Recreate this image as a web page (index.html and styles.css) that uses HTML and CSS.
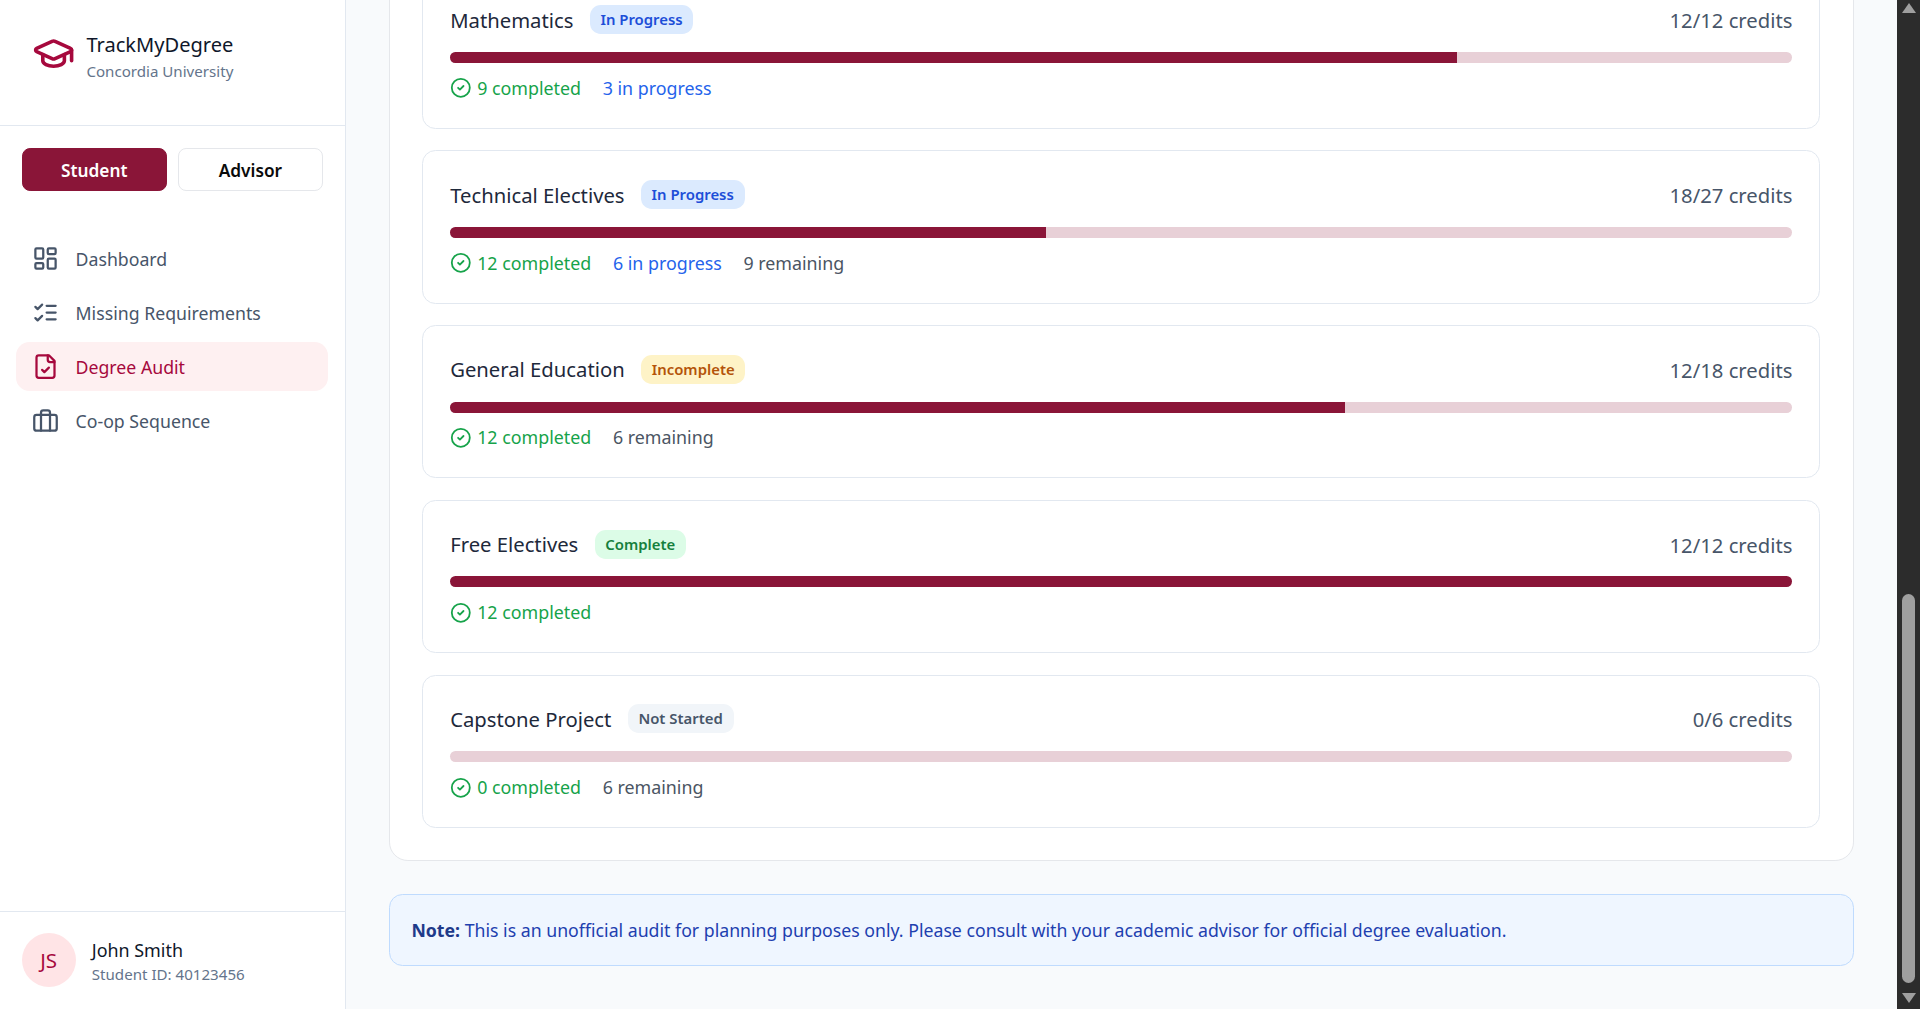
FILE: index.html
```html
<!DOCTYPE html>
<html lang="en">
<head>
  <meta charset="UTF-8">
  <meta name="viewport" content="width=device-width, initial-scale=1.0">
  <title>Degree Audit | TrackMyDegree</title>
  <link rel="stylesheet" href="styles.css">
</head>
<body>
  <aside class="sidebar">
    <div class="brand">
      <svg class="brand-icon" viewBox="0 0 24 24"><path d="M21.42 10.922a1 1 0 0 0-.019-1.838L12.83 5.18a2 2 0 0 0-1.66 0L2.6 9.08a1 1 0 0 0 0 1.832l8.57 3.908a2 2 0 0 0 1.66 0z"/><path d="M22 10v6"/><path d="M6 12.5V16a6 3 0 0 0 12 0v-3.5"/></svg>
      <div class="brand-text">
        <div class="brand-name">TrackMyDegree</div>
        <div class="brand-sub">Concordia University</div>
      </div>
    </div>

    <div class="role-toggle">
      <button class="role-btn active">Student</button>
      <button class="role-btn">Advisor</button>
    </div>

    <nav class="nav">
      <a href="#" class="nav-item">
        <svg class="nav-icon" viewBox="0 0 24 24"><rect x="3" y="3" width="7" height="9" rx="1"/><rect x="14" y="3" width="7" height="5" rx="1"/><rect x="14" y="12" width="7" height="9" rx="1"/><rect x="3" y="16" width="7" height="5" rx="1"/></svg>
        <span class="nav-label">Dashboard</span>
      </a>
      <a href="#" class="nav-item">
        <svg class="nav-icon" viewBox="0 0 24 24"><path d="m3 17 2 2 4-4"/><path d="m3 7 2 2 4-4"/><path d="M13 6h8"/><path d="M13 12h8"/><path d="M13 18h8"/></svg>
        <span class="nav-label">Missing Requirements</span>
      </a>
      <a href="#" class="nav-item active">
        <svg class="nav-icon" viewBox="0 0 24 24"><path d="M15 2H6a2 2 0 0 0-2 2v16a2 2 0 0 0 2 2h12a2 2 0 0 0 2-2V7Z"/><path d="M14 2v4a2 2 0 0 0 2 2h4"/><path d="m9 15 2 2 4-4"/></svg>
        <span class="nav-label">Degree Audit</span>
      </a>
      <a href="#" class="nav-item">
        <svg class="nav-icon" viewBox="0 0 24 24"><rect x="2" y="7" width="20" height="14" rx="2"/><path d="M16 21V5a2 2 0 0 0-2-2h-4a2 2 0 0 0-2 2v16"/></svg>
        <span class="nav-label">Co-op Sequence</span>
      </a>
    </nav>

    <div class="user">
      <div class="avatar">JS</div>
      <div>
        <div class="user-name">John Smith</div>
        <div class="user-id">Student ID: 40123456</div>
      </div>
    </div>
  </aside>

  <main class="main">
    <section class="panel">
      <article class="req">
        <div class="req-head">
          <div class="req-title"><h3>Mathematics</h3><span class="badge progress">In Progress</span></div>
          <span class="credits">12/12 credits</span>
        </div>
        <div class="bar"><div class="bar-fill" style="width: 75%"></div></div>
        <div class="req-meta">
          <span class="done"><svg class="check" viewBox="0 0 24 24"><circle cx="12" cy="12" r="10"/><path d="m9 12 2 2 4-4"/></svg>9 completed</span>
          <span class="doing">3 in progress</span>
        </div>
      </article>

      <article class="req">
        <div class="req-head">
          <div class="req-title"><h3>Technical Electives</h3><span class="badge progress">In Progress</span></div>
          <span class="credits">18/27 credits</span>
        </div>
        <div class="bar"><div class="bar-fill" style="width: 44.4%"></div></div>
        <div class="req-meta">
          <span class="done"><svg class="check" viewBox="0 0 24 24"><circle cx="12" cy="12" r="10"/><path d="m9 12 2 2 4-4"/></svg>12 completed</span>
          <span class="doing">6 in progress</span>
          <span class="left">9 remaining</span>
        </div>
      </article>

      <article class="req">
        <div class="req-head">
          <div class="req-title"><h3>General Education</h3><span class="badge incomplete">Incomplete</span></div>
          <span class="credits">12/18 credits</span>
        </div>
        <div class="bar"><div class="bar-fill" style="width: 66.67%"></div></div>
        <div class="req-meta">
          <span class="done"><svg class="check" viewBox="0 0 24 24"><circle cx="12" cy="12" r="10"/><path d="m9 12 2 2 4-4"/></svg>12 completed</span>
          <span class="left">6 remaining</span>
        </div>
      </article>

      <article class="req">
        <div class="req-head">
          <div class="req-title"><h3>Free Electives</h3><span class="badge complete">Complete</span></div>
          <span class="credits">12/12 credits</span>
        </div>
        <div class="bar"><div class="bar-fill" style="width: 100%"></div></div>
        <div class="req-meta">
          <span class="done"><svg class="check" viewBox="0 0 24 24"><circle cx="12" cy="12" r="10"/><path d="m9 12 2 2 4-4"/></svg>12 completed</span>
        </div>
      </article>

      <article class="req">
        <div class="req-head">
          <div class="req-title"><h3>Capstone Project</h3><span class="badge not-started">Not Started</span></div>
          <span class="credits">0/6 credits</span>
        </div>
        <div class="bar"><div class="bar-fill" style="width: 0%"></div></div>
        <div class="req-meta">
          <span class="done"><svg class="check" viewBox="0 0 24 24"><circle cx="12" cy="12" r="10"/><path d="m9 12 2 2 4-4"/></svg>0 completed</span>
          <span class="left">6 remaining</span>
        </div>
      </article>
    </section>

    <div class="note"><strong>Note:</strong> This is an unofficial audit for planning purposes only. Please consult with your academic advisor for official degree evaluation.</div>
  </main>

  <div class="scrollbar">
    <span class="arrow up"></span>
    <div class="track"><div class="thumb"></div></div>
    <span class="arrow down"></span>
  </div>
</body>
</html>
```

FILE: styles.css
```css
/* 1rem = one 16px unit of the design at the 135% display scale */
html {
  font-size: 21.6px;
}

body {
  margin: 0;
  height: 100vh;
  display: flex;
  overflow: hidden;
  font-family: "Noto Sans", "Open Sans", Arial, sans-serif;
  font-size: 0.82rem;
  background-color: #f8fafc;
}

/* Sidebar */
.sidebar {
  width: 16rem;
  flex-shrink: 0;
  box-sizing: border-box;
  display: flex;
  flex-direction: column;
  background-color: white;
  border-right: 1px solid #e2e8f0;
}

.brand {
  height: 126px;
  box-sizing: border-box;
  padding: 1.5rem 1.5rem 0;
  display: flex;
  align-items: flex-start;
  gap: 0.5rem;
  border-bottom: 1px solid #e2e8f0;
}

.brand-icon {
  width: 2rem;
  height: 2rem;
  flex-shrink: 0;
  fill: none;
  stroke: #a6093d;
  stroke-width: 2;
  stroke-linecap: round;
  stroke-linejoin: round;
}

.brand-text {
  padding-top: 1px;
}

.brand-name {
  font-size: 0.93rem;
  line-height: 1.1rem;
  color: #0f172a;
}

.brand-sub {
  margin-top: 0.15rem;
  font-size: 0.7rem;
  line-height: 1.1rem;
  color: #64748b;
}

.role-toggle {
  display: flex;
  gap: 0.5rem;
  padding: 1rem 1rem 0;
}

.role-btn {
  flex: 1;
  height: 2rem;
  padding: 2px 0 0;
  font-family: inherit;
  font-size: 0.8rem;
  font-weight: 600;
  color: #0a0a0a;
  background-color: white;
  border: 1px solid #e5e7eb;
  border-radius: 0.375rem;
}

.role-btn.active {
  color: white;
  background-color: #8a1538;
  border-color: #8a1538;
}

.nav {
  display: flex;
  flex-direction: column;
  gap: 0.25rem;
  padding: 1rem 0.75rem 0;
  margin-top: 1rem;
}

.nav-item {
  height: 2.25rem;
  padding: 0 0.75rem;
  display: flex;
  align-items: center;
  gap: 0.75rem;
  color: #475569;
  text-decoration: none;
  border-radius: 0.625rem;
}

.nav-item.active {
  color: #a6093d;
  background-color: #fef0f1;
}

.nav-label {
  padding-top: 2px;
}

.nav-icon {
  width: 1.25rem;
  height: 1.25rem;
  flex-shrink: 0;
  fill: none;
  stroke: currentColor;
  stroke-width: 2;
  stroke-linecap: round;
  stroke-linejoin: round;
}

.user {
  margin-top: auto;
  padding: 1rem;
  display: flex;
  align-items: center;
  gap: 0.75rem;
  border-top: 1px solid #e2e8f0;
}

.avatar {
  width: 2.5rem;
  height: 2.5rem;
  display: flex;
  align-items: center;
  justify-content: center;
  font-size: 0.95rem;
  color: #a6093d;
  background-color: #ffe4e6;
  border-radius: 50%;
}

.user-name {
  padding-top: 1px;
  font-size: 0.83rem;
  line-height: 1.25rem;
  color: #0f172a;
}

.user-id {
  font-size: 0.7rem;
  line-height: 1rem;
  color: #64748b;
}

/* Main column is scrolled to its end, so it hangs from the bottom */
.main {
  flex: 1;
  min-width: 0;
  box-sizing: border-box;
  padding: 0 2rem 2rem;
  display: flex;
  flex-direction: column;
  justify-content: flex-end;
  gap: 1.5rem;
  overflow: hidden;
}

.panel {
  flex-shrink: 0;
  padding: 1.5rem;
  display: flex;
  flex-direction: column;
  gap: 1rem;
  background-color: white;
  border: 1px solid #e5e7eb;
  border-radius: 0.875rem;
}

.req {
  padding: 1.25rem;
  border: 1px solid #e2e8f0;
  border-radius: 0.625rem;
}

.req-head {
  height: 1.5rem;
  display: flex;
  align-items: center;
  justify-content: space-between;
  margin-bottom: 0.75rem;
}

.req-title {
  display: flex;
  align-items: center;
  gap: 0.75rem;
}

h3 {
  margin: 0;
  font-size: 0.9375rem;
  font-weight: 400;
  color: #1e293b;
}

.credits {
  padding-top: 1px;
  font-size: 0.9375rem;
  color: #475569;
}

.badge {
  padding: 0 0.5rem;
  font-size: 0.69rem;
  line-height: 1.333rem;
  font-weight: 600;
  border-radius: 0.5rem;
}

.badge.progress { color: #1d4ed8; background-color: #dbeafe; }
.badge.incomplete { color: #b45309; background-color: #fef3c7; }
.badge.complete { color: #15803d; background-color: #dcfce7; }
.badge.not-started { color: #475569; background-color: #f1f5f9; }

.bar {
  height: 0.5rem;
  background-color: #e8d0d7;
  border-radius: 0.25rem;
  overflow: hidden;
}

.bar-fill {
  height: 100%;
  background-color: #8a1538;
}

.req-meta {
  margin-top: 0.5rem;
  margin-bottom: -1px;
  padding-top: 1px;
  display: flex;
  gap: 1rem;
  font-size: 0.826rem;
  line-height: 1.25rem;
}

.done {
  display: flex;
  align-items: center;
  gap: 0.25rem;
  color: #16a34a;
}

.doing { color: #2563eb; }
.left { color: #4b5563; }

.check {
  width: 1rem;
  height: 1rem;
  fill: none;
  stroke: currentColor;
  stroke-width: 2;
  stroke-linecap: round;
  stroke-linejoin: round;
}

.note {
  flex-shrink: 0;
  padding: calc(1rem + 1px) 1rem calc(1rem - 1px);
  line-height: 1.25rem;
  color: #1e40af;
  background-color: #eff6ff;
  border: 1px solid #bfdbfe;
  border-radius: 0.625rem;
}

.note strong {
  color: #1e3a8a;
}

/* Scrollbar */
.scrollbar {
  width: 23px;
  flex-shrink: 0;
  display: flex;
  flex-direction: column;
  align-items: center;
  background-color: #2c2c2c;
}

.track {
  flex: 1;
  width: 100%;
  display: flex;
  flex-direction: column;
  justify-content: flex-end;
  align-items: center;
}

.thumb {
  width: 13px;
  height: 389px;
  margin-bottom: 7px;
  background-color: #9f9f9f;
  border-radius: 7px;
}

.arrow {
  width: 0;
  height: 0;
  margin: 3px 0 6px;
  border-left: 7.5px solid transparent;
  border-right: 7.5px solid transparent;
}

.arrow.up { border-bottom: 10px solid #9f9f9f; }
.arrow.down { border-top: 10px solid #9f9f9f; }
```
